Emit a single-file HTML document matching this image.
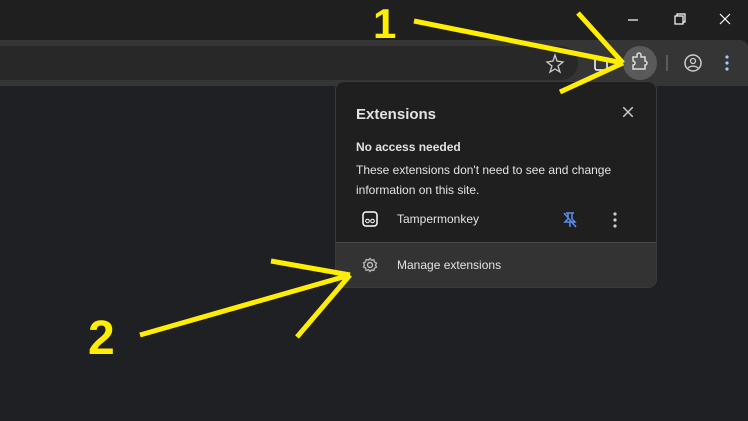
<!DOCTYPE html><html><head><style>
body{margin:0;width:748px;height:421px;background:#1f2023;position:relative;overflow:hidden;font-family:"Liberation Sans",sans-serif;}
.title{position:absolute;left:0;top:0;width:748px;height:40px;background:#1f1f1f}
.tool{position:absolute;left:0;top:40px;width:748px;height:46px;background:#353535;border-radius:0 8px 0 0}
.omni{position:absolute;left:-20px;top:46px;width:598px;height:34px;background:#282828;border-radius:17px}
.pop{position:absolute;left:335px;top:81px;width:320px;height:205px;background:#1f1f1f;border:1px solid #3a3a3a;border-radius:9px;overflow:hidden;color:#e3e3e3}
.t{position:absolute;white-space:nowrap}
</style></head><body>
<div class="title"></div>
<div class="tool"></div>
<div class="omni"></div>
<svg style="position:absolute;left:0;top:0" width="748" height="421">
<g stroke="#fff" stroke-width="1.2" fill="none">
<line x1="628" y1="20" x2="638" y2="20"/>
<rect x="675" y="16" width="8" height="8"/><path d="M677 16v-2h8v8h-2"/>
<path d="M720 14l10 10M730 14l-10 10"/>
</g>
<circle cx="640" cy="63" r="17" fill="#5a5a5a"/>
<path d="M633 57h4v-2a2 2 0 0 1 4 0v2h4v4a2 2 0 0 1 0 4v4h-12v-4a2 2 0 0 0 0-4z" stroke="#ddd" stroke-width="1.5" fill="none" transform="translate(0,0)"/>
<path d="M547 62l6-1 2-6 2 6 6 1-5 4 2 6-5-3-5 3 2-6z" stroke="#ccc" stroke-width="1.3" fill="none"/>
<rect x="595" y="58" width="12" height="12" rx="2" stroke="#fff" stroke-width="1.5" fill="none"/>
<line x1="667" y1="55" x2="667" y2="71" stroke="#666" stroke-width="1.5"/>
<circle cx="693" cy="63" r="8" stroke="#ccc" stroke-width="1.5" fill="none"/>
<circle cx="693" cy="61" r="2.5" stroke="#ccc" stroke-width="1.3" fill="none"/>
<path d="M688 68a6 4 0 0 1 10 0" stroke="#ccc" stroke-width="1.3" fill="none"/>
<g fill="#a8c7fa"><circle cx="727" cy="57" r="1.6"/><circle cx="727" cy="63" r="1.6"/><circle cx="727" cy="69" r="1.6"/></g>
</svg>
<div class="pop">
<div class="t" style="left:20px;top:24px;font-size:15px;font-weight:bold">Extensions</div>
<svg class="t" style="left:287px;top:25px" width="10" height="10"><path d="M0 0l10 10M10 0l-10 10" stroke="#ccc" stroke-width="1.5"/></svg>
<div class="t" style="left:20px;top:58px;font-size:12px;font-weight:bold">No access needed</div>
<div class="t" style="left:20px;top:78px;font-size:12px;line-height:20px">These extensions don't need to see and change<br>information on this site.</div>
<svg class="t" style="left:26px;top:129px" width="16" height="16"><rect x="1" y="1" width="14" height="14" rx="3" stroke="#fff" stroke-width="1.5" fill="none"/><circle cx="5.5" cy="10" r="1.8" stroke="#fff" fill="none"/><circle cx="10.5" cy="10" r="1.8" stroke="#fff" fill="none"/></svg>
<div class="t" style="left:61px;top:130px;font-size:12px">Tampermonkey</div>
<svg class="t" style="left:227px;top:130px" width="14" height="16"><path d="M3 1h8M5 1v6l-3 3h10l-3-3V1M7 10v5M1 1l12 14" stroke="#5b8def" stroke-width="1.5" fill="none"/></svg>
<g></g>
<svg class="t" style="left:277px;top:130px" width="4" height="16"><circle cx="2" cy="2" r="1.6" fill="#ccc"/><circle cx="2" cy="8" r="1.6" fill="#ccc"/><circle cx="2" cy="14" r="1.6" fill="#ccc"/></svg>
<div style="position:absolute;left:0;top:160px;width:320px;height:45px;background:#333;border-top:1px solid #4a4a4a"></div>
<svg class="t" style="left:26px;top:175px" width="16" height="16"><circle cx="8" cy="8" r="2.5" stroke="#bbb" stroke-width="1.4" fill="none"/><path d="M8 1.5l1.5 1.8 2.3-.6.6 2.3 2.1 1.1-1 2 1 2-2.1 1.1-.6 2.3-2.3-.6L8 14.5l-1.5-1.8-2.3.6-.6-2.3-2.1-1.1 1-2-1-2 2.1-1.1.6-2.3 2.3.6z" stroke="#bbb" stroke-width="1.3" fill="none"/></svg>
<div class="t" style="left:61px;top:176px;font-size:12px">Manage extensions</div>
</div>
<svg style="position:absolute;left:0;top:0" width="748" height="421">
<g stroke="#ffee00" stroke-width="5" stroke-linecap="butt" fill="none">
<path d="M414 21L623 63M578 13L623 63M560 92L623 63"/>
<path d="M140 335L350 275M271 261L350 275M297 337L350 275"/>
</g>
<text x="373" y="38" font-family="Liberation Sans" font-weight="bold" font-size="42" fill="#ffee00">1</text>
<text x="88" y="354" font-family="Liberation Sans" font-weight="bold" font-size="48" fill="#ffee00">2</text>
</svg>
</body></html>
